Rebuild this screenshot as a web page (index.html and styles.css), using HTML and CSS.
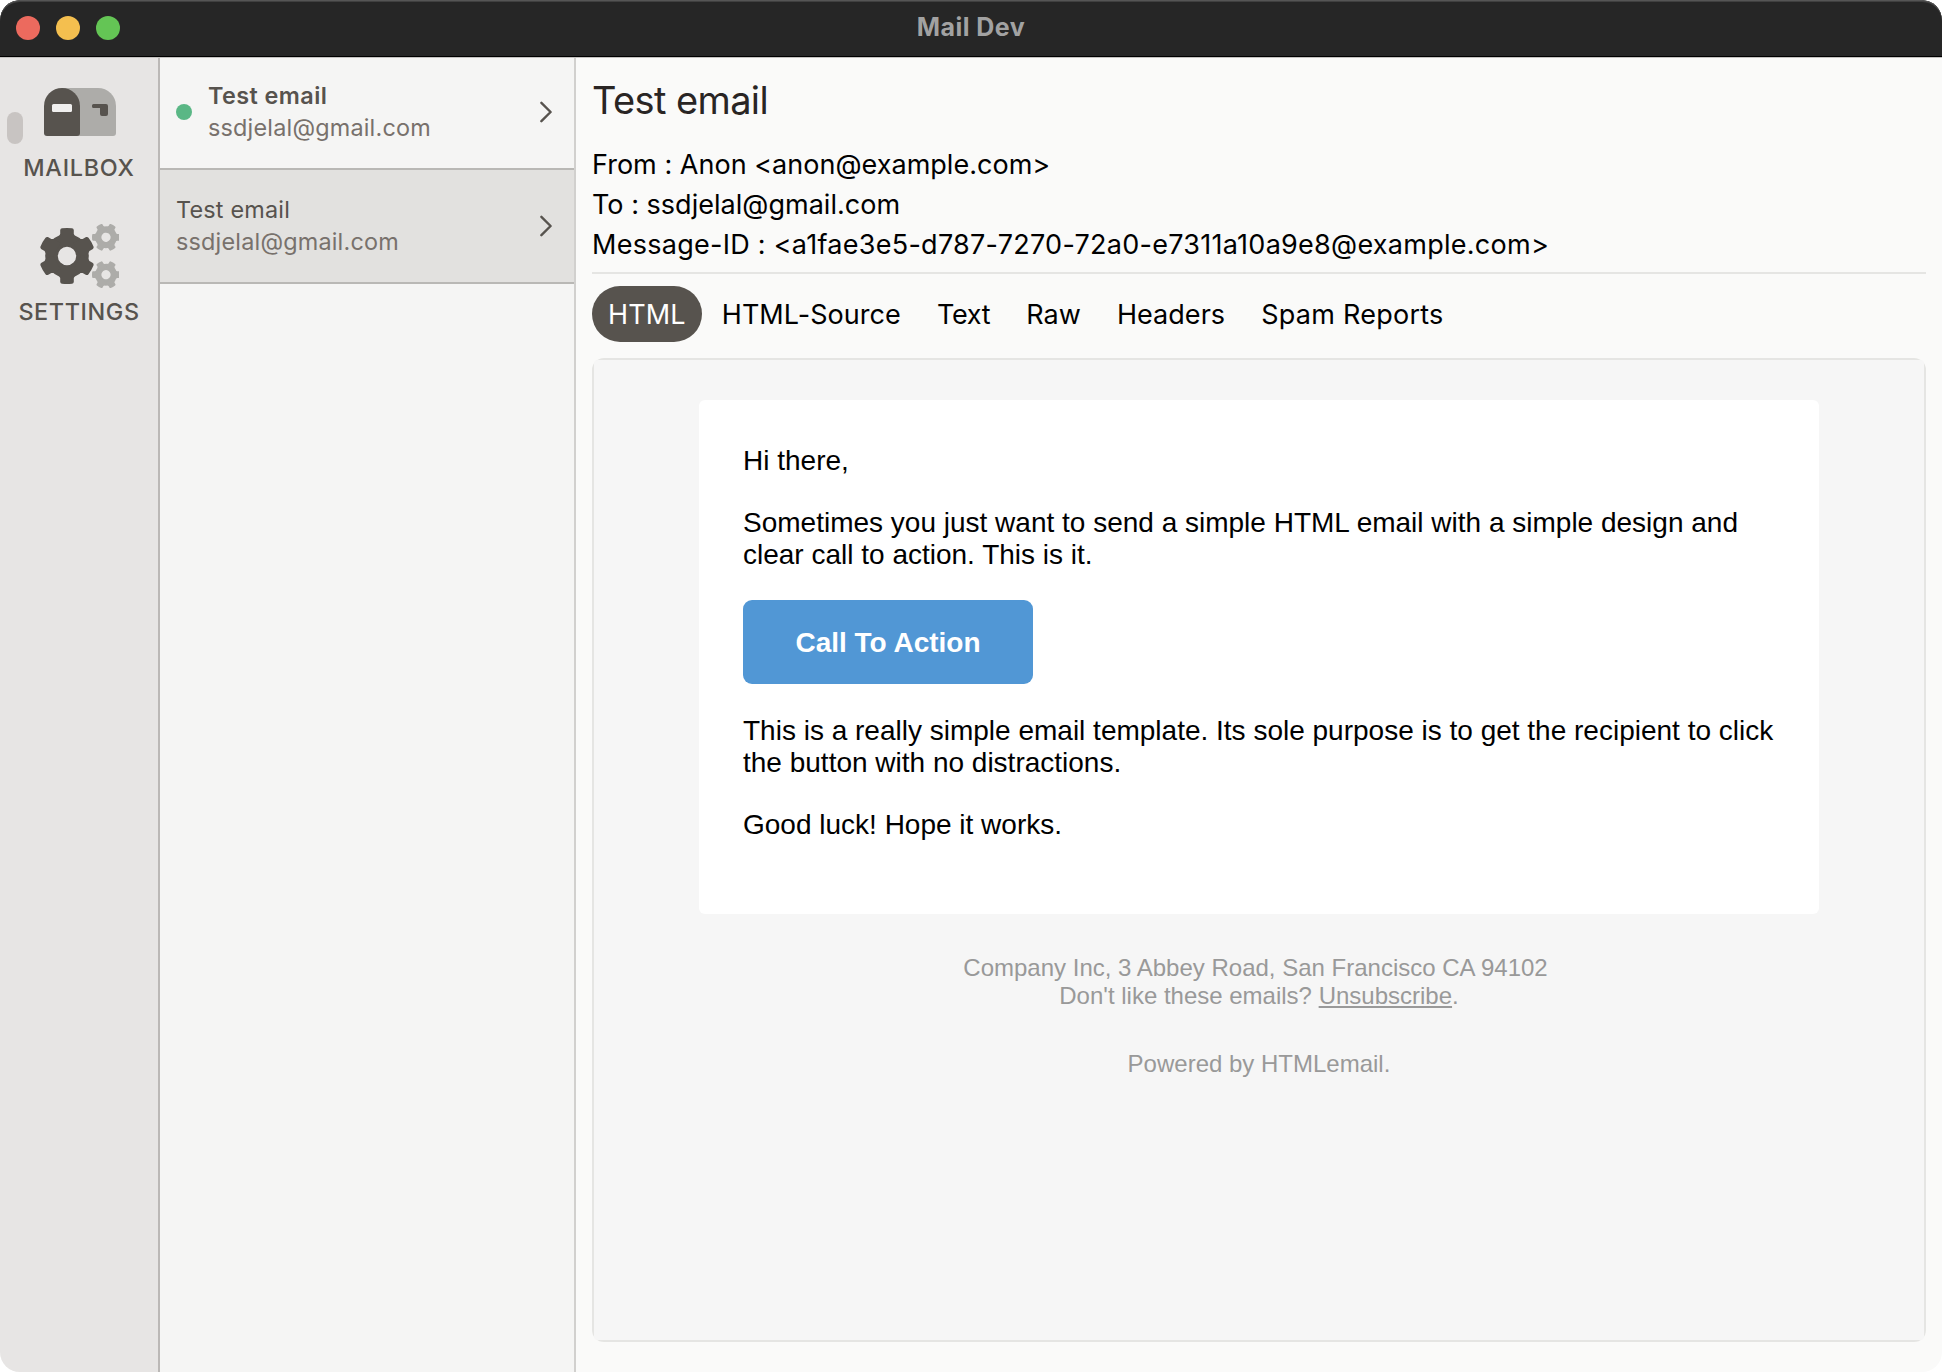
FILE: index.html
```html
<!DOCTYPE html>
<html lang="en">
<head>
<meta charset="utf-8">
<title>Mail Dev</title>
<link rel="stylesheet" href="styles.css">
</head>
<body>
<div class="window">
  <header class="titlebar">
    <div class="lights"><span class="light red"></span><span class="light yellow"></span><span class="light green"></span></div>
    <h1 class="app-name">Mail Dev</h1>
  </header>
  <div class="panes">
    <nav class="sidebar">
      <span class="handle"></span>
      <a class="nav-item">
        <svg class="nav-icon" viewBox="39 72 80 80">
          <path fill="#adaca9" d="M62 88H98A18 18 0 0 1 116 106V133A3 3 0 0 1 113 136H62Z"/>
          <path fill="#57534e" d="M62 88A18 18 0 0 1 80 106V133A3 3 0 0 1 77 136H47A3 3 0 0 1 44 133V106A18 18 0 0 1 62 88Z"/>
          <rect x="52" y="104" width="20" height="8" rx="1.5" fill="#f0efee"/>
          <path fill="#57534e" d="M93.5 104H106A2 2 0 0 1 108 106V114A2 2 0 0 1 106 116H102A2 2 0 0 1 100 114V108H93.5A1.5 1.5 0 0 1 92 106.5V105.5A1.5 1.5 0 0 1 93.5 104Z"/>
        </svg>
        <span class="nav-label mailbox">MAILBOX</span>
      </a>
      <a class="nav-item">
        <svg class="nav-icon" viewBox="39 216 80 80">
          <defs>
            <path id="tooth" d="M-8 -20L-6.8 -22V-26Q-6.5 -27.5 -5 -27.7Q0 -28.4 5 -27.7Q6.5 -27.5 6.8 -26V-22L8 -20V-12H-8Z"/>
            <g id="gear">
              <path fill-rule="evenodd" d="M-21.8 0A21.8 21.8 0 1 0 21.8 0A21.8 21.8 0 1 0 -21.8 0ZM-9.2 0A9.2 9.2 0 1 0 9.2 0A9.2 9.2 0 1 0 -9.2 0Z"/>
              <use href="#tooth"/>
              <use href="#tooth" transform="rotate(60)"/>
              <use href="#tooth" transform="rotate(120)"/>
              <use href="#tooth" transform="rotate(180)"/>
              <use href="#tooth" transform="rotate(240)"/>
              <use href="#tooth" transform="rotate(300)"/>
            </g>
          </defs>
          <use href="#gear" fill="#57534e" transform="translate(67 256)"/>
          <use href="#gear" fill="#adaca9" transform="translate(106 237.3) rotate(30) scale(.5)"/>
          <use href="#gear" fill="#adaca9" transform="translate(106 274.7) rotate(30) scale(.5)"/>
        </svg>
        <span class="nav-label">SETTINGS</span>
      </a>
    </nav>
    <section class="list">
      <article class="mail unread">
        <span class="dot"></span>
        <div class="mail-text"><div class="mail-subject">Test email</div><div class="mail-to">ssdjelal@gmail.com</div></div>
        <svg class="chevron" width="16" height="24" viewBox="0 0 16 24"><path d="M1.4 2.8L10.6 12L1.4 21.2"/></svg>
      </article>
      <article class="mail selected">
        <div class="mail-text"><div class="mail-subject">Test email</div><div class="mail-to">ssdjelal@gmail.com</div></div>
        <svg class="chevron" width="16" height="24" viewBox="0 0 16 24"><path d="M1.4 2.8L10.6 12L1.4 21.2"/></svg>
      </article>
    </section>
    <main class="message">
      <header class="message-head">
        <h2 class="subject">Test email</h2>
        <p class="meta">From : Anon &lt;anon@example.com&gt;</p>
        <p class="meta">To : ssdjelal@gmail.com</p>
        <p class="meta id">Message-ID : &lt;a1fae3e5-d787-7270-72a0-e7311a10a9e8@example.com&gt;</p>
      </header>
      <div class="tabs">
        <a class="tab active">HTML</a><a class="tab">HTML-Source</a><a class="tab tight">Text</a><a class="tab">Raw</a><a class="tab">Headers</a><a class="tab wide">Spam Reports</a>
      </div>
      <div class="preview">
        <div class="frame">
          <div class="email">
            <p>Hi there,</p>
            <p>Sometimes you just want to send a simple HTML email with a simple design and clear call to action. This is it.</p>
            <a class="cta">Call To Action</a>
            <p>This is a really simple email template. Its sole purpose is to get the recipient to click the button with no distractions.</p>
            <p>Good luck! Hope it works.</p>
          </div>
          <footer class="email-foot">
            <p><span class="address">Company Inc, 3 Abbey Road, San Francisco CA 94102</span><br>Don't like these emails? <a class="unsub">Unsubscribe</a>.</p>
            <p>Powered by HTMLemail.</p>
          </footer>
        </div>
      </div>
    </main>
  </div>
</div>
</body>
</html>
```
FILE: styles.css
```css
* { box-sizing: border-box; }
body { margin: 0; background: #fff; font-family: Inter, "Liberation Sans", sans-serif; }
h1, h2, p { margin: 0; font-weight: 400; }

.window { display: flex; flex-direction: column; width: 1942px; height: 1372px; border-radius: 20px; overflow: hidden; background: #fafaf9; }

.titlebar { position: relative; z-index: 1; display: grid; grid-template-columns: 1fr auto 1fr; align-items: center; height: 56px; padding: 0 16px; background: #262626; border-radius: 20px 20px 0 0; box-shadow: inset 0 1px 0 #555, inset 0 2px 0 #404040, 0 1px 0 #000, 0 2px 0 #c4c2c0; }
.lights { display: flex; gap: 16px; }
.light { width: 24px; height: 24px; border-radius: 50%; }
.red { background: #ec6a5e; }
.yellow { background: #f4bf4f; }
.green { background: #64c555; }
.app-name { margin-bottom: 2px; font-size: 25px; line-height: 54px; font-weight: 700; letter-spacing: .45px; color: #a2a2a2; }

.panes { flex: 1; display: flex; min-height: 0; }

.sidebar { position: relative; display: flex; flex-direction: column; gap: 32px; width: 160px; padding-top: 16px; background: #e7e5e4; border-right: 2px solid #bbb8b6; }
.handle { position: absolute; left: 7px; top: 56px; width: 16px; height: 32px; border-radius: 8px; background: #c8c4c2; }
.nav-item { display: flex; flex-direction: column; align-items: center; }
.nav-icon { display: block; width: 80px; height: 80px; }
.nav-label { font-size: 23.4px; line-height: 32px; font-weight: 500; letter-spacing: .6px; color: #57534e; }
.nav-label.mailbox { letter-spacing: .75px; }

.list { width: 416px; background: #f5f5f4; border-right: 2px solid #d1d0ce; }
.mail { display: flex; align-items: center; height: 114px; padding: 0 18px 0 16px; border-bottom: 2px solid #b9b8b5; }
.mail.selected { background: #e2e1df; }
.dot { width: 16px; height: 16px; margin-right: 16px; border-radius: 50%; background: #5ab785; }
.mail-text { flex: 1; font-size: 23.4px; line-height: 32px; letter-spacing: .2px; }
.mail-subject { color: #57534e; }
.unread .mail-subject { font-weight: 600; letter-spacing: .42px; }
.mail-to { color: #78716c; }
.chevron { fill: none; stroke: #57534e; stroke-width: 2.4; stroke-linecap: round; stroke-linejoin: round; }

.message { flex: 1; display: flex; flex-direction: column; padding: 16px 16px 30px; }
.message-head { padding-bottom: 7px; border-bottom: 2px solid #e5e5e3; }
.subject { margin-bottom: 17px; font-size: 38px; line-height: 56px; letter-spacing: -.6px; color: #292524; }
.meta { font-size: 27px; line-height: 40px; letter-spacing: .02px; color: #000; }
.meta.id { letter-spacing: .27px; }

.tabs { display: flex; gap: 4px; margin: 12px 0 16px; }
.tab { height: 56px; padding: 1px 16px 0; font-size: 27px; line-height: 56px; letter-spacing: .05px; color: #000; }
.tab.wide { letter-spacing: .25px; }
.tab.tight { letter-spacing: -.3px; }
.tab.active { border-radius: 28px; background: #57534e; color: #fff; letter-spacing: .15px; }

/* The frame's own corners are tighter than the border's, so it paints over the border there. */
.preview { flex: 1; display: flex; border: 2px solid #e5e5e3; border-radius: 12px; }
.frame { flex: 1; padding: 40px 105px; border-radius: 4px; background: #f6f6f6; font-family: "Liberation Sans", Arial, sans-serif; }
.email { width: 1120px; padding: 45px 44px 43px; border-radius: 6px; background: #fff; font-size: 28px; line-height: 32px; color: #000; }
.email p { margin-bottom: 30px; }
.email .cta { display: block; width: 290px; height: 84px; margin: -1px 0 31px; padding-top: 1px; border-radius: 9px; background: #5197d5; color: #fff; font-weight: 700; line-height: 84px; text-align: center; }
.email-foot { display: flex; flex-direction: column; gap: 40px; width: 1120px; padding-top: 40px; font-size: 24px; line-height: 28px; text-align: center; color: #999; }
.address { margin-right: 7px; }
.unsub { text-decoration: underline; }
```
